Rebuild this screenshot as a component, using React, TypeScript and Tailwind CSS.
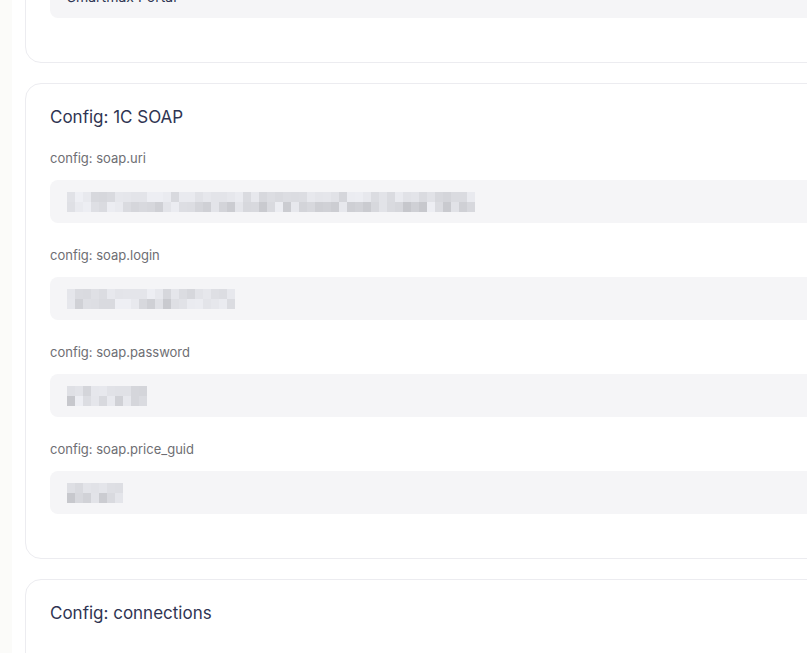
import React from 'react';

type Field = { label: string; value?: string; cells?: number };

// pseudo-random grey mosaic standing in for redacted values
function Mosaic({ cells, seed }: { cells: number; seed: number }) {
  const shade = (i: number, row: number) => {
    const x = Math.sin(seed * 97 + i * 12.9898 + row * 78.233) * 43758.5453;
    const r = x - Math.floor(x);
    const v = Math.round(238 - r * (row === 0 ? 26 : 40));
    return `rgb(${v}, ${v + 1}, ${Math.min(255, v + 6)})`;
  };
  return (
    <div className="flex flex-col">
      {[0, 1].map((row) => (
        <div key={row} className="flex">
          {Array.from({ length: cells }).map((_, i) => (
            <span
              key={i}
              className="block h-[10px] w-[8px]"
              style={{ backgroundColor: shade(i, row) }}
            />
          ))}
        </div>
      ))}
    </div>
  );
}

function ConfigCard({ title, fields, seed }: { title: string; fields: Field[]; seed: number }) {
  return (
    <div className="rounded-2xl border border-[#ececf0] bg-white px-6 pt-6 pb-[44px]">
      <h2 className="text-[17px] leading-[19px] text-[#2f3553]">{title}</h2>
      <div className="mt-[21px] flex flex-col gap-[22px]">
        {fields.map((f, idx) => (
          <div key={f.label}>
            <div className="text-[13px] leading-[20px] text-[#6e6e73]">{f.label}</div>
            <div className="mt-3 flex h-[43px] items-center rounded-lg bg-[#f5f5f7] px-[17px] text-sm text-[#2f3553]">
              {f.cells ? <Mosaic cells={f.cells} seed={seed + idx} /> : f.value}
            </div>
          </div>
        ))}
      </div>
    </div>
  );
}

export default function App() {
  return (
    <div
      className="flex h-[653px] w-[807px] overflow-hidden bg-white"
      style={{ fontFamily: 'Inter, "Noto Sans", sans-serif' }}
    >
      <div className="w-[12px] shrink-0 bg-[#fbfbf9]" />
      <div className="ml-[13px] -mt-[122px] flex w-[1100px] shrink-0 flex-col gap-5">
        <ConfigCard
          title="Config: general"
          seed={1}
          fields={[{ label: 'config: app.name', value: 'Smartmax Portal' }]}
        />
        <ConfigCard
          title="Config: 1C SOAP"
          seed={3}
          fields={[
            { label: 'config: soap.uri', cells: 51 },
            { label: 'config: soap.login', cells: 21 },
            { label: 'config: soap.password', cells: 10 },
            { label: 'config: soap.price_guid', cells: 7 },
          ]}
        />
        <ConfigCard title="Config: connections" seed={9} fields={[]} />
      </div>
    </div>
  );
}
